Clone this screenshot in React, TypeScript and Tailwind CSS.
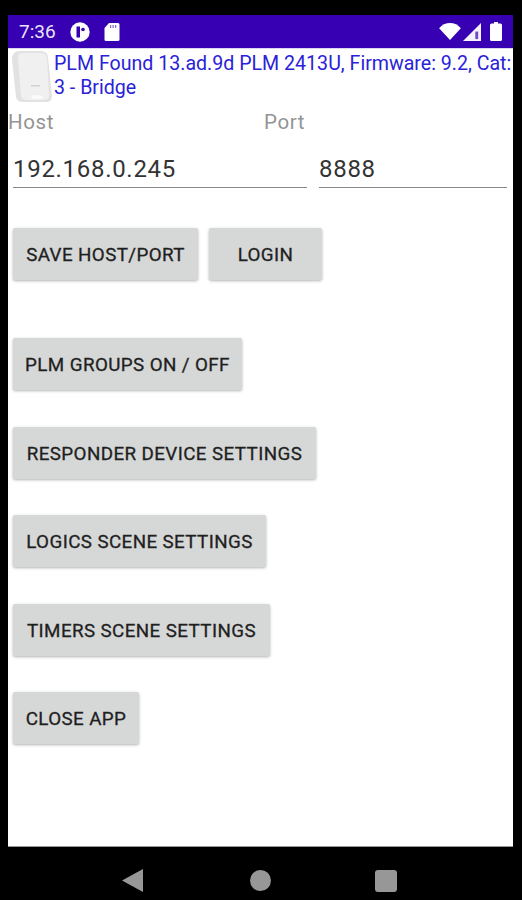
import React from 'react';

const font = { fontFamily: 'Roboto, sans-serif' };

const ActionButton: React.FC<{ label: string; className: string }> = ({ label, className }) => (
  <button className={`h-[52px] shrink-0 whitespace-nowrap rounded-[2px] bg-[#d6d7d7] pt-[3px] text-center text-[18.8px] font-normal tracking-[0.4px] text-[#1f1f1f] [-webkit-text-stroke:0.3px_#1f1f1f] shadow-[0_1px_3px_rgba(0,0,0,0.3)] ${className}`}>
    {label}
  </button>
);

const StatusBar: React.FC = () => (
  <div className="flex h-[33px] items-center justify-between bg-[#3700b3] px-[11px] text-white">
    <div className="flex items-center gap-[14px]">
      <span className="text-[19px] leading-none text-[#e9e4f7]">7:36</span>
      <svg width="20" height="20" viewBox="0 0 20 20">
        <circle cx="10" cy="10" r="9.7" fill="#fff" />
        <rect x="6.5" y="4.5" width="3.5" height="11" fill="#3700b3" />
        <circle cx="13" cy="7.5" r="1.8" fill="#3700b3" />
      </svg>
      <svg width="16" height="19" viewBox="0 0 16 19">
        <path d="M5 1h9a1.5 1.5 0 0 1 1.5 1.5v15A1.5 1.5 0 0 1 14 19H2a1.5 1.5 0 0 1-1.5-1.5V6z" fill="#fff" />
        <rect x="6" y="3" width="1.2" height="3" fill="#3700b3" opacity="0.6" />
        <rect x="8.5" y="3" width="1.2" height="3" fill="#3700b3" opacity="0.6" />
        <rect x="11" y="3" width="1.2" height="3" fill="#3700b3" opacity="0.6" />
      </svg>
    </div>
    <div className="flex items-center gap-[2px]">
      <svg width="22" height="17" viewBox="0 0 23 18">
        <path d="M0 5.5C3 2 7 0 11.5 0S20 2 23 5.5L11.5 18z" fill="#fff" />
      </svg>
      <svg width="18" height="18" viewBox="0 0 19 19">
        <path d="M19 0v19H0z" fill="#fff" opacity="0.95" />
        <path d="M13 9h3v8h-3z" fill="#3700b3" opacity="0.7" />
      </svg>
      <svg width="12" height="19" viewBox="0 0 12 19" className="ml-[7px]">
        <path d="M4 0h4v1.5h2.5A1.5 1.5 0 0 1 12 3v14.5a1.5 1.5 0 0 1-1.5 1.5h-9A1.5 1.5 0 0 1 0 17.5V3a1.5 1.5 0 0 1 1.5-1.5H4z" fill="#fff" />
      </svg>
    </div>
  </div>
);

const DeviceImage: React.FC = () => (
  <svg width="42" height="53" viewBox="0 0 42 53" className="ml-[3px] mt-[1px] shrink-0">
    <path d="M9 1h21q6 0 7 6l4 40q0 5-6 5H12q-6 0-7-5L1 9q0-8 8-8z" fill="#e2e2e2" />
    <path d="M11 3h19q5 0 6 5l2 38q0 4-5 4H15q-4 0-5-4L7 8q0-5 4-5z" fill="#f0f0f0" />
    <rect x="20" y="35" width="9" height="1.5" fill="#d2d2d2" />
    <ellipse cx="26" cy="47" rx="6" ry="2" fill="#fbfbfb" />
  </svg>
);

const NavBar: React.FC = () => (
  <div className="flex h-[53px] items-center justify-center bg-black pr-[3px]">
    <div className="flex items-center pt-[14px]">
      <svg width="21" height="23" viewBox="0 0 21 23">
        <path d="M21 0v23L0 11.5z" fill="#979797" />
      </svg>
      <div className="ml-[107px] h-[21px] w-[21px] rounded-full bg-[#979797]" />
      <div className="ml-[104px] h-[22px] w-[22px] rounded-[3px] bg-[#979797]" />
    </div>
  </div>
);

export default function App() {
  return (
    <div className="flex h-[900px] w-[522px] flex-col overflow-hidden bg-black pt-[15px]" style={font}>
      <div className="ml-[8px] flex w-[505px] flex-1 flex-col border-b border-[#9a9a9a] bg-white">
        <StatusBar />
        <div className="flex h-[52px] border-t border-[#d9d6ef]">
          <DeviceImage />
          <p className="ml-[1px] w-[460px] pt-[3px] text-[19.6px] leading-[23.5px] text-[#2a22d8]">
            PLM Found 13.ad.9d PLM 2413U, Firmware: 9.2, Cat: 3 - Bridge
          </p>
        </div>
        <div className="mt-[10px] flex h-[24px] items-center text-[20.5px] tracking-[0.6px] text-[#949494]">
          <span className="w-[256px]">Host</span>
          <span>Port</span>
        </div>
        <div className="mt-[15px] flex gap-[12px] pl-[5px] pr-[6px]">
          <div className="h-[39px] w-[294px] border-b-[1.5px] border-[#8a8a8a] text-[24px] leading-[40px] tracking-[0.7px] text-[#333333]">
            192.168.0.245
          </div>
          <div className="h-[39px] flex-1 border-b-[1.5px] border-[#8a8a8a] text-[24px] leading-[40px] tracking-[0.7px] text-[#333333]">
            8888
          </div>
        </div>
        <div className="flex flex-col pl-[5px]">
          <div className="mt-[40px] flex gap-[11px]">
            <ActionButton label="SAVE HOST/PORT" className="w-[185px]" />
            <ActionButton label="LOGIN" className="w-[113px]" />
          </div>
          <div className="mt-[58px] flex flex-col items-start gap-[36.5px]">
            <ActionButton label="PLM GROUPS ON / OFF" className="w-[229px]" />
            <ActionButton label="RESPONDER DEVICE SETTINGS" className="w-[303px]" />
            <ActionButton label="LOGICS SCENE SETTINGS" className="w-[253px]" />
            <ActionButton label="TIMERS SCENE SETTINGS" className="w-[257px]" />
            <ActionButton label="CLOSE APP" className="w-[126px]" />
          </div>
        </div>
      </div>
      <NavBar />
    </div>
  );
}
